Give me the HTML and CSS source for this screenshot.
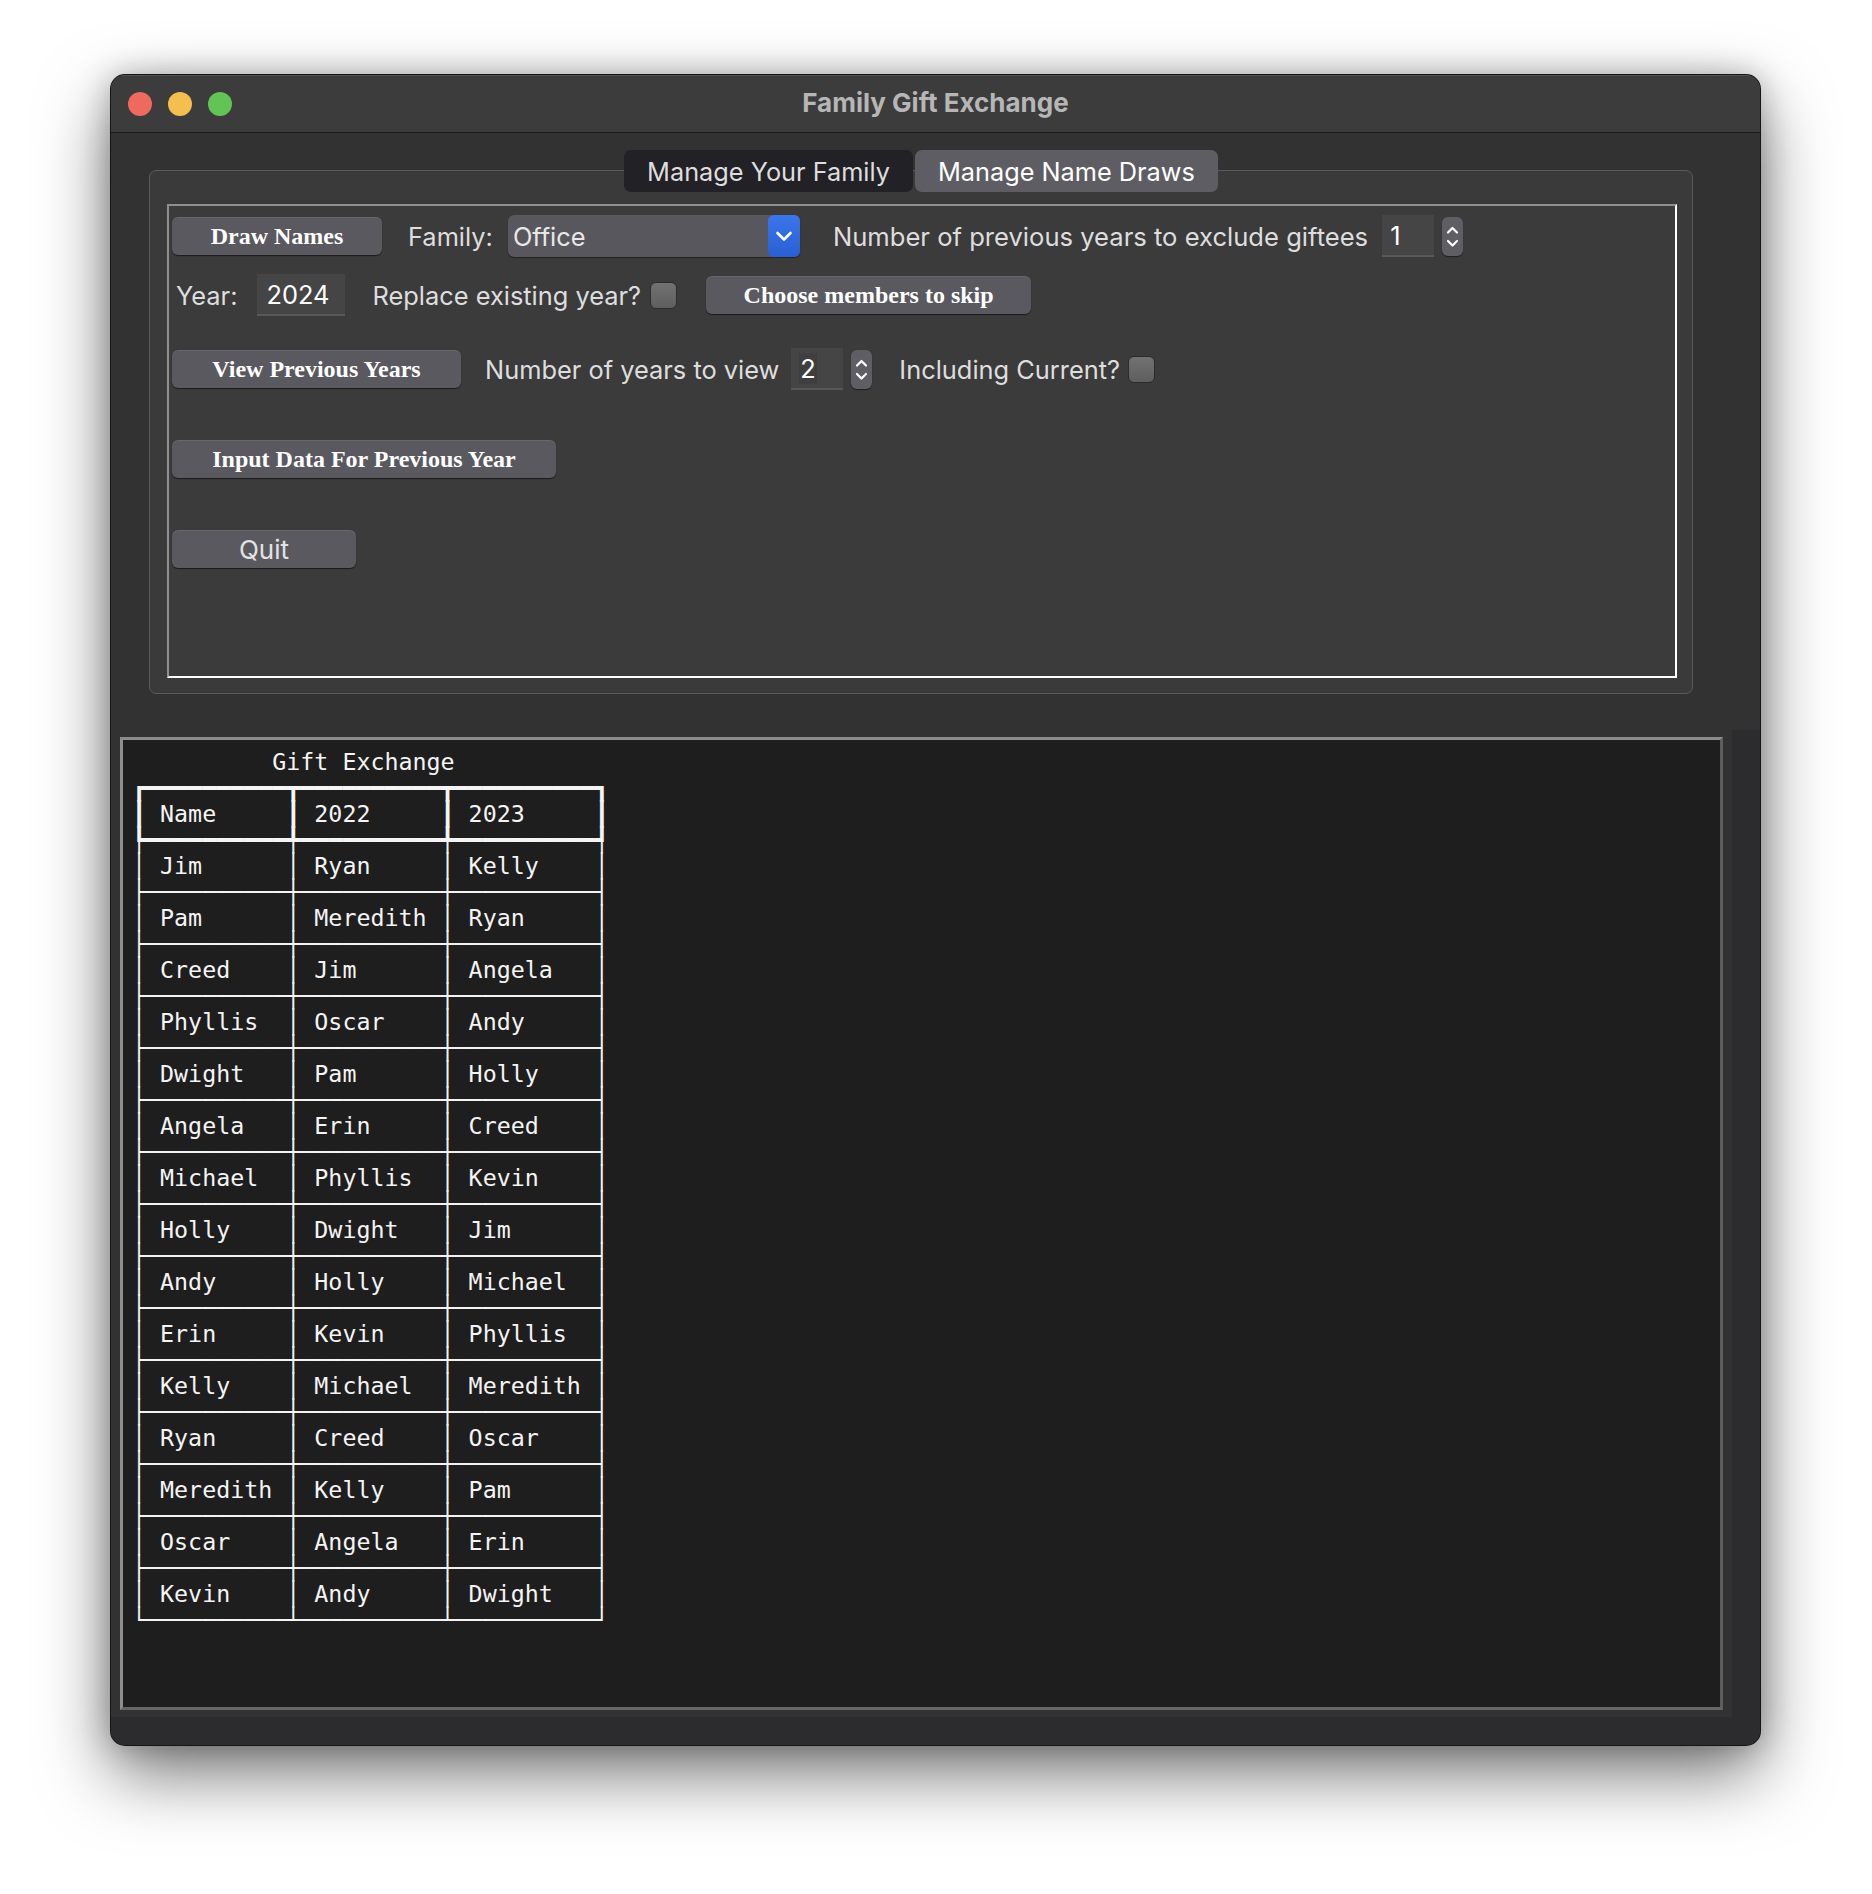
FILE: index.html
```html
<!DOCTYPE html>
<html lang="en">
<head>
<meta charset="utf-8">
<title>Family Gift Exchange</title>
<link rel="stylesheet" href="styles.css">
</head>
<body>
<div class="window">
  <div class="titlebar">
    <div class="lights">
      <span class="light red"></span>
      <span class="light yellow"></span>
      <span class="light green"></span>
    </div>
    <div class="title">Family Gift Exchange</div>
    <div class="tb-spacer"></div>
  </div>

  <div class="top">
    <div class="notebook">
      <div class="tabs">
        <div class="tab">Manage Your Family</div>
        <div class="tab active">Manage Name Draws</div>
      </div>
      <div class="tabbox">
        <div class="frame">
          <div class="row r1">
            <button class="btn b-draw">Draw Names</button>
            <span class="lbl l-family">Family:</span>
            <div class="select">
              <span class="sel-text">Office</span>
              <span class="sel-arrow">
                <svg width="32" height="42" viewBox="0 0 32 42"><path d="M9.5 18 L16 24.5 L22.5 18" fill="none" stroke="#fff" stroke-width="2.6" stroke-linecap="round" stroke-linejoin="round"/></svg>
              </span>
            </div>
            <span class="lbl l-exclude">Number of previous years to exclude giftees</span>
            <div class="entry e-num"><span>1</span></div>
            <div class="spin">
              <svg width="21" height="39" viewBox="0 0 21 39"><path d="M6 15.5 L10.5 11 L15 15.5 M6 24 L10.5 28.5 L15 24" fill="none" stroke="#fff" stroke-width="2.2" stroke-linecap="round" stroke-linejoin="round"/></svg>
            </div>
          </div>

          <div class="row r2">
            <span class="lbl l-year">Year:</span>
            <div class="entry e-year"><span>2024</span></div>
            <span class="lbl l-replace">Replace existing year?</span>
            <span class="check c-replace"></span>
            <button class="btn b-choose">Choose members to skip</button>
          </div>

          <div class="row r3">
            <button class="btn b-view">View Previous Years</button>
            <span class="lbl l-view">Number of years to view</span>
            <div class="entry e-num e-two"><span class="caret">2</span></div>
            <div class="spin">
              <svg width="21" height="39" viewBox="0 0 21 39"><path d="M6 15.5 L10.5 11 L15 15.5 M6 24 L10.5 28.5 L15 24" fill="none" stroke="#fff" stroke-width="2.2" stroke-linecap="round" stroke-linejoin="round"/></svg>
            </div>
            <span class="lbl l-incl">Including Current?</span>
            <span class="check c-incl"></span>
          </div>

          <div class="row r4">
            <button class="btn b-input">Input Data For Previous Year</button>
          </div>

          <div class="row r5">
            <button class="btn b-quit">Quit</button>
          </div>
        </div>
      </div>
    </div>
  </div>

  <div class="middle">
    <div class="content">
      <div class="textarea">
<pre class="output">          Gift Exchange
┏━━━━━━━━━━┳━━━━━━━━━━┳━━━━━━━━━━┓
┃ Name     ┃ 2022     ┃ 2023     ┃
┡━━━━━━━━━━╇━━━━━━━━━━╇━━━━━━━━━━┩
│ Jim      │ Ryan     │ Kelly    │
├──────────┼──────────┼──────────┤
│ Pam      │ Meredith │ Ryan     │
├──────────┼──────────┼──────────┤
│ Creed    │ Jim      │ Angela   │
├──────────┼──────────┼──────────┤
│ Phyllis  │ Oscar    │ Andy     │
├──────────┼──────────┼──────────┤
│ Dwight   │ Pam      │ Holly    │
├──────────┼──────────┼──────────┤
│ Angela   │ Erin     │ Creed    │
├──────────┼──────────┼──────────┤
│ Michael  │ Phyllis  │ Kevin    │
├──────────┼──────────┼──────────┤
│ Holly    │ Dwight   │ Jim      │
├──────────┼──────────┼──────────┤
│ Andy     │ Holly    │ Michael  │
├──────────┼──────────┼──────────┤
│ Erin     │ Kevin    │ Phyllis  │
├──────────┼──────────┼──────────┤
│ Kelly    │ Michael  │ Meredith │
├──────────┼──────────┼──────────┤
│ Ryan     │ Creed    │ Oscar    │
├──────────┼──────────┼──────────┤
│ Meredith │ Kelly    │ Pam      │
├──────────┼──────────┼──────────┤
│ Oscar    │ Angela   │ Erin     │
├──────────┼──────────┼──────────┤
│ Kevin    │ Andy     │ Dwight   │
└──────────┴──────────┴──────────┘</pre>
      </div>
    </div>
    <div class="strip"></div>
  </div>
  <div class="bottom-strip"></div>
</div>
</body>
</html>
```

FILE: styles.css
```css
* { box-sizing: border-box; }
html, body { margin: 0; padding: 0; }
body {
  background: #ffffff;
  width: 1872px;
  height: 1894px;
  overflow: hidden;
  font-family: Inter, "Noto Sans", sans-serif;
}

.window {
  margin: 75px 0 0 111px;
  width: 1649px;
  height: 1670px;
  border-radius: 14px;
  overflow: hidden;
  background: #323232;
  display: flex;
  flex-direction: column;
  box-shadow: 0 0 0 1px #151515, 0 28px 70px rgba(0,0,0,0.55), 0 0 30px rgba(0,0,0,0.25);
}

/* title bar */
.titlebar {
  height: 58px;
  flex: none;
  background: #3c3c3c;
  border-bottom: 1px solid #1b1b1b;
  display: grid;
  grid-template-columns: 1fr auto 1fr;
  align-items: center;
  box-shadow: inset 0 1px 0 rgba(255,255,255,0.12);
}
.lights { display: flex; gap: 16px; padding-left: 17px; }
.light { width: 24px; height: 24px; border-radius: 50%; display: block; }
.red { background: #ee6a5f; }
.yellow { background: #f5bf4f; }
.green { background: #61c454; }
.title {
  font-weight: 700;
  font-size: 26px;
  color: #b6b6b6;
  margin-top: -2px;
}

/* top section */
.top {
  height: 597px;
  flex: none;
  background: #323232;
  padding-left: 38px;
}
.notebook { width: 1544px; }
.tabs {
  display: flex;
  justify-content: center;
  gap: 2px;
  margin-top: 17px;
  height: 42px;
  position: relative;
  z-index: 1;
}
.tab {
  height: 42px;
  padding: 0 23px;
  border-radius: 7px;
  background: #222126;
  color: #dedede;
  font-size: 25.3px;
  display: flex;
  align-items: center;
}
.tab.active { background: #5e5d63; color: #ffffff; }

.tabbox {
  margin-top: -22px;
  height: 524px;
  border: 1px solid #5a5a5a;
  border-radius: 7px;
  background: #3a3a3a;
  padding: 33px 15px 15px 17px;
}
.frame {
  height: 474px;
  border-style: solid;
  border-width: 2px;
  border-color: #8f8f8f #ffffff #ffffff #8f8f8f;
  background: #3b3b3b;
  padding: 6px 0 0 3px;
}

.row { display: flex; align-items: center; height: 48px; }
.r2 { margin-top: 11px; }
.r3 { margin-top: 26px; }
.r4 { margin-top: 42px; }
.r5 { margin-top: 42px; }

.lbl { font-size: 25.4px; color: #dedede; white-space: nowrap; }

.btn {
  height: 38px;
  padding: 0 38px;
  border: none;
  border-radius: 6px;
  background: #5a5960;
  color: #ffffff;
  font-family: "Liberation Serif", serif;
  font-weight: 700;
  font-size: 24px;
  box-shadow: 0 1px 1px rgba(0,0,0,0.55), inset 0 1px 0 rgba(255,255,255,0.08);
  white-space: nowrap;
  display: flex;
  align-items: center;
  justify-content: center;
}
.b-draw { width: 210px; }
.b-choose { width: 325px; margin-left: 29px; }
.b-view { width: 289px; }
.b-input { width: 384px; }
.b-quit {
  width: 184px;
  font-family: Inter, "Noto Sans", sans-serif;
  font-weight: 400;
  font-size: 26px;
  color: #e2e2e2;
}

.l-family { margin-left: 26px; }
.select {
  margin-left: 15px;
  width: 292px;
  height: 42px;
  border-radius: 6px;
  background: #58575d;
  display: flex;
  align-items: center;
  justify-content: space-between;
  box-shadow: 0 1px 1px rgba(0,0,0,0.45);
}
.sel-text { font-size: 25.4px; color: #e8e8e8; padding-left: 5px; }
.sel-arrow {
  width: 32px;
  height: 42px;
  border-radius: 6px;
  background: linear-gradient(#3a76ea, #2a5fd2);
  display: block;
}
.sel-arrow svg { display: block; }
.l-exclude { margin-left: 33px; font-size: 25.6px; }

.entry {
  height: 42px;
  background: #454545;
  border-bottom: 2px solid #585858;
  color: #ffffff;
  font-size: 25.4px;
  display: flex;
  align-items: center;
  padding-left: 8px;
}
.e-num { width: 52px; margin-left: 14px; }
.spin {
  margin-left: 8px;
  width: 21px;
  height: 39px;
  border-radius: 6px;
  background: #5f5e64;
  box-shadow: 0 1px 1px rgba(0,0,0,0.5);
}
.spin svg { display: block; }

.l-year { margin-left: 4px; }
.e-year { width: 88px; margin-left: 20px; padding-left: 9px; }
.l-replace { margin-left: 27px; }
.check {
  width: 27px;
  height: 27px;
  border-radius: 6px;
  background: linear-gradient(#727272, #5e5e5e);
  border: 1px solid #2c2c2c;
  display: block;
}
.c-replace { margin-left: 9px; }

.l-view { margin-left: 24px; }
.e-two { margin-left: 12px; }
.e-two .caret { background: #3f3f3f; padding: 0 1px; }
.l-incl { margin-left: 27px; }
.c-incl { margin-left: 8px; }

/* middle/bottom */
.middle {
  height: 987px;
  flex: none;
  display: flex;
}
.content {
  width: 1621px;
  background: #323232;
  padding: 7px 9px 7px 9px;
  display: flex;
}
.strip { flex: 1; background: #2c2c2e; }
.bottom-strip { height: 28px; flex: none; background: #2c2c2e; }

.textarea {
  flex: 1;
  border-style: solid;
  border-width: 3px;
  border-color: #8c8c8c #5d5d5d #666666 #8e8e8e;
  background: #1e1e1e;
  padding: 9px;
}
.output {
  margin: 0;
  font-family: "DejaVu Sans Mono", "Liberation Mono", monospace;
  font-size: 23.3px;
  line-height: 26px;
  color: #f4f4f4;
}
```
